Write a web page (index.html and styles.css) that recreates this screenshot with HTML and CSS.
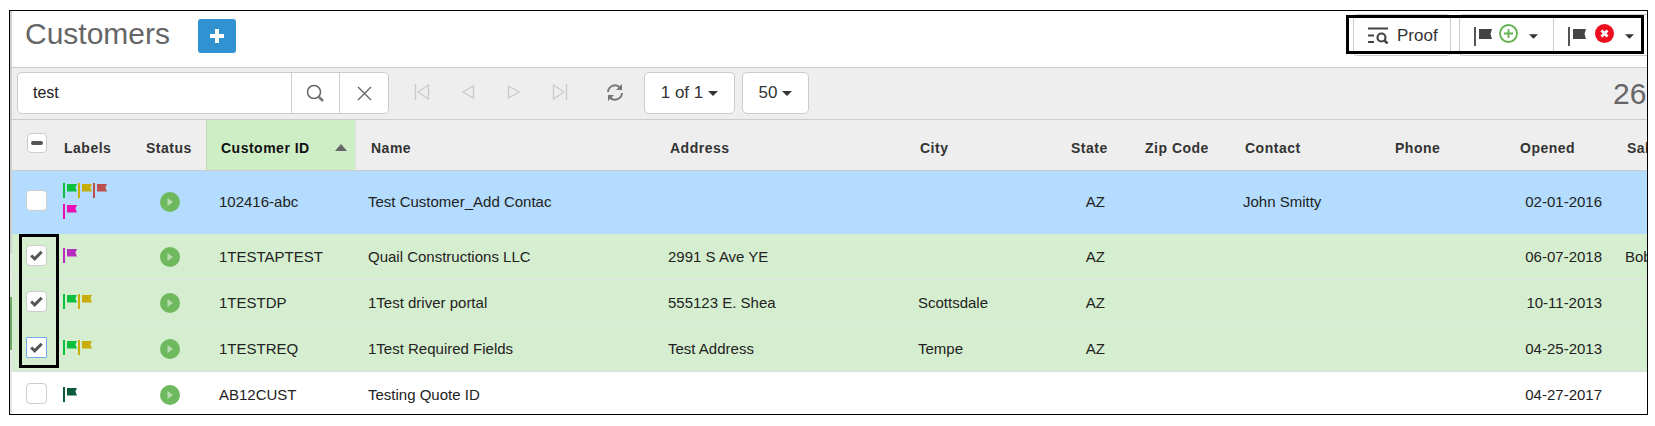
FILE: index.html
```html
<!DOCTYPE html>
<html lang="en">
<head>
<meta charset="utf-8">
<title>Customers</title>
<link rel="stylesheet" href="styles.css">
</head>
<body>
<svg class="defs" width="0" height="0" aria-hidden="true">
  <symbol id="flag" viewBox="0 0 14 15">
    <rect x="0" y="0" width="2" height="15" fill="currentColor"/>
    <path d="M4 1h10l-1.600 3.500L14 8.500H4z" fill="currentColor"/>
  </symbol>
  <symbol id="play" viewBox="0 0 20 20">
    <circle cx="10" cy="10" r="10" fill="#6eb85e"/>
    <path d="M7.500 6l5.500 4-5.500 4z" fill="#b9dcb0"/>
  </symbol>
  <symbol id="caret" viewBox="0 0 10 5">
    <path d="M0 0h10L5 5z" fill="currentColor"/>
  </symbol>
  <symbol id="bigflag" viewBox="0 0 18 19">
    <rect x="0" y="0" width="2" height="19" fill="#555"/>
    <path d="M5 2h13l-1.500 5 1.500 5H5z" fill="#444"/>
  </symbol>
  <symbol id="check" viewBox="0 0 13 11">
    <path d="M1.200 5.500l3.500 3.300 7-7" stroke="#555" stroke-width="3" fill="none"/>
  </symbol>
</svg>
<div class="frame">
  <div class="strip"></div>
  <header class="top">
    <div class="title-wrap">
      <h1 class="title">Customers</h1>
      <button class="add" type="button">
        <svg width="14" height="14" viewBox="0 0 14 14"><path d="M5 0h4v5h5v4H9v5H5V9H0V5h5z" fill="#fff"/></svg>
      </button>
    </div>
    <div class="actions">
      <button class="act proof" type="button">
        <svg width="21" height="17" viewBox="0 0 21 17"><path d="M0 1.500h20M0 8.500h6M0 15h6" stroke="#444" stroke-width="2" fill="none"/><circle cx="13.500" cy="10.500" r="4" stroke="#444" stroke-width="2.200" fill="none"/><path d="M16.500 13.500l3 3" stroke="#444" stroke-width="2.500"/></svg>
        <span>Proof</span>
      </button>
      <div class="act-group">
        <button class="act flagbtn" type="button">
          <svg class="bf" width="18" height="19"><use href="#bigflag"/></svg>
          <svg class="ic" width="19" height="19" viewBox="0 0 19 19"><circle cx="9.500" cy="9.500" r="8.500" fill="#fff" stroke="#62b34f" stroke-width="1.800"/><path d="M9.500 5v9M5 9.500h9" stroke="#62b34f" stroke-width="1.800"/></svg>
          <svg class="cr" width="9" height="5"><use href="#caret"/></svg>
        </button>
        <button class="act flagbtn second" type="button">
          <svg class="bf" width="18" height="19"><use href="#bigflag"/></svg>
          <svg class="ic" width="19" height="19" viewBox="0 0 19 19"><circle cx="9.500" cy="9.500" r="9.500" fill="#ee0f1e"/><path d="M6.500 6.500l6 6M12.500 6.500l-6 6" stroke="#fff" stroke-width="2.800"/></svg>
          <svg class="cr" width="9" height="5"><use href="#caret"/></svg>
        </button>
      </div>
    </div>
  </header>
  <div class="toolbar">
    <div class="search">
      <span class="search-text">test</span>
      <span class="search-btn">
        <svg width="19" height="19" viewBox="0 0 19 19"><circle cx="8" cy="8" r="6.500" stroke="#666" stroke-width="1.500" fill="none"/><path d="M12.500 12.500l4.500 4.500" stroke="#777" stroke-width="2.500"/></svg>
      </span>
      <span class="search-btn clear">
        <svg width="15" height="15" viewBox="0 0 15 15"><path d="M1 1l13 13M14 1L1 14" stroke="#666" stroke-width="1.400"/></svg>
      </span>
    </div>
    <div class="pager">
      <svg width="16" height="16" viewBox="0 0 16 16"><path d="M1.500 0v16M14.500 1L4 8l10.500 7z" stroke="#ccc" stroke-width="1.400" fill="none"/></svg>
      <svg width="16" height="16" viewBox="0 0 16 16"><path d="M13.500 2L3 8l10.500 6z" stroke="#ccc" stroke-width="1.400" fill="none"/></svg>
      <svg width="16" height="16" viewBox="0 0 16 16"><path d="M2.500 2L13 8 2.500 14z" stroke="#ccc" stroke-width="1.400" fill="none"/></svg>
      <svg width="16" height="16" viewBox="0 0 16 16"><path d="M14.500 0v16M1.500 1L12 8 1.500 15z" stroke="#ccc" stroke-width="1.400" fill="none"/></svg>
    </div>
    <svg class="refresh" width="18" height="17" viewBox="0 0 18 17"><path d="M2 8a7 7 0 0 1 12-4.500M16 9a7 7 0 0 1-12 4.500" stroke="#777" stroke-width="2" fill="none"/><path d="M16 0v6h-6zM2 17v-6h6z" fill="#777"/></svg>
    <button class="sel sel-page" type="button">1 of 1 <svg width="10" height="5"><use href="#caret"/></svg></button>
    <button class="sel sel-size" type="button">50 <svg width="10" height="5"><use href="#caret"/></svg></button>
    <span class="count">26</span>
  </div>
  <div class="grid-wrap">
    <table class="grid">
      <colgroup>
        <col class="c-cb"><col class="c-labels"><col class="c-status"><col class="c-id"><col class="c-name"><col class="c-addr"><col class="c-city"><col class="c-state"><col class="c-zip"><col class="c-contact"><col class="c-phone"><col class="c-opened"><col class="c-sales">
      </colgroup>
      <thead>
        <tr>
          <th class="cb-cell"><span class="box box-minus"><i></i></span></th>
          <th class="th-labels">Labels</th>
          <th class="th-status">Status</th>
          <th class="th-sorted">Customer ID<svg class="sort" width="12" height="7" viewBox="0 0 12 7"><path d="M6 0l6 7H0z" fill="#666"/></svg></th>
          <th>Name</th><th>Address</th><th>City</th><th>State</th><th>Zip Code</th><th>Contact</th><th>Phone</th><th>Opened</th><th>Sales</th>
        </tr>
      </thead>
      <tbody>
        <tr class="row-blue">
          <td class="cb-cell"><span class="box"></span></td>
          <td class="labels"><div class="flags">
            <svg class="f f-green"><use href="#flag"/></svg><svg class="f f-yellow"><use href="#flag"/></svg><svg class="f f-red"><use href="#flag"/></svg><svg class="f f-pink"><use href="#flag"/></svg>
          </div></td>
          <td class="status"><svg width="20" height="20"><use href="#play"/></svg></td>
          <td>102416-abc</td><td class="name">Test Customer_Add Contac</td><td></td><td></td><td class="st">AZ</td><td></td><td>John Smitty</td><td></td><td class="date">02-01-2016</td><td></td>
        </tr>
        <tr class="row-green">
          <td class="cb-cell"><span class="box"><svg width="13" height="11"><use href="#check"/></svg></span></td>
          <td class="labels"><div class="flags"><svg class="f f-purple"><use href="#flag"/></svg></div></td>
          <td class="status"><svg width="20" height="20"><use href="#play"/></svg></td>
          <td>1TESTAPTEST</td><td class="name">Quail Constructions LLC</td><td>2991 S Ave YE</td><td></td><td class="st">AZ</td><td></td><td></td><td></td><td class="date">06-07-2018</td><td>Bob</td>
        </tr>
        <tr class="row-green">
          <td class="cb-cell"><span class="box"><svg width="13" height="11"><use href="#check"/></svg></span></td>
          <td class="labels"><div class="flags"><svg class="f f-green"><use href="#flag"/></svg><svg class="f f-yellow"><use href="#flag"/></svg></div></td>
          <td class="status"><svg width="20" height="20"><use href="#play"/></svg></td>
          <td>1TESTDP</td><td class="name">1Test driver portal</td><td>555123 E. Shea</td><td>Scottsdale</td><td class="st">AZ</td><td></td><td></td><td></td><td class="date">10-11-2013</td><td></td>
        </tr>
        <tr class="row-green row-end">
          <td class="cb-cell"><span class="box focus"><svg width="13" height="11"><use href="#check"/></svg></span></td>
          <td class="labels"><div class="flags"><svg class="f f-green"><use href="#flag"/></svg><svg class="f f-yellow"><use href="#flag"/></svg></div></td>
          <td class="status"><svg width="20" height="20"><use href="#play"/></svg></td>
          <td>1TESTREQ</td><td class="name">1Test Required Fields</td><td>Test Address</td><td>Tempe</td><td class="st">AZ</td><td></td><td></td><td></td><td class="date">04-25-2013</td><td></td>
        </tr>
        <tr class="row-white">
          <td class="cb-cell"><span class="box"></span></td>
          <td class="labels"><div class="flags"><svg class="f f-dark"><use href="#flag"/></svg></div></td>
          <td class="status"><svg width="20" height="20"><use href="#play"/></svg></td>
          <td>AB12CUST</td><td class="name">Testing Quote ID</td><td></td><td></td><td></td><td></td><td></td><td></td><td class="date">04-27-2017</td><td></td>
        </tr>
      </tbody>
    </table>
  </div>
  <div class="mark mark-top"></div>
  <div class="mark mark-left"></div>
</div>
</body>
</html>
```
FILE: styles.css
```css
* { box-sizing: border-box; }
html, body { margin: 0; padding: 0; background: #fff; }
body { padding: 10px 0 0 9px; font-family: "Liberation Sans", Arial, sans-serif; color: #222; overflow: hidden; }
.defs { position: absolute; }
.frame { position: relative; width: 1639px; height: 405px; border: 1px solid #000; padding-left: 2px; overflow: hidden; background: #fff; }
.strip { position: absolute; left: 0; top: 0; bottom: 0; width: 2px; background: linear-gradient(#cfcfcf 0, #cfcfcf 60%, #e6e6e6 60%); }
.strip::after { content: ""; position: absolute; left: 0; top: 286px; width: 2px; height: 53px; background: #6fa863; }
button { font-family: inherit; }

.top { height: 56px; display: flex; justify-content: space-between; align-items: flex-start; }
.title-wrap { display: flex; align-items: flex-start; padding: 8px 0 0 13px; }
.title { margin: 0; font-size: 30px; line-height: 30px; font-weight: 400; color: #666; }
.add { margin-left: 28px; width: 38px; height: 34px; border: 0; border-radius: 3px; background: #3092d1; display: flex; align-items: center; justify-content: center; padding: 0; }

.actions { display: flex; gap: 8px; padding-top: 3px; margin-right: -6px; }
.act { height: 42px; background: #fff; border: 1px solid #ccc; border-radius: 4px; display: flex; align-items: center; padding: 0; color: #333; font-size: 17px; }
.proof { width: 98px; gap: 8px; padding-left: 14px; padding-top: 1px; }
.act-group { display: flex; }
.flagbtn { width: 94px; padding-left: 14px; border-radius: 4px 0 0 4px; border-right: 0; }
.flagbtn.second { border-radius: 0 4px 4px 0; border-right: 1px solid #ccc; width: 100px; }
.flagbtn svg { flex: none; }
.bf { margin: 3px 7px 0 0; }
.ic { margin-bottom: 3px; }
.cr { margin: 2px 0 0 11px; color: #333; }
.second .bf { margin-right: 9px; }
.second .cr { margin-left: 11px; }

.toolbar { height: 53px; background: #eee; border-top: 1px solid #ccc; border-bottom: 1px solid #ccc; display: flex; align-items: center; padding-left: 5px; }
.search { width: 372px; height: 42px; background: #fff; border: 1px solid #ccc; border-radius: 5px; display: flex; margin-top: -1px; }
.search-text { flex: 1; font-size: 16px; line-height: 40px; padding-left: 15px; color: #222; }
.search-btn { width: 48px; border-left: 1px solid #ccc; display: flex; align-items: center; justify-content: center; }
.search-btn.clear { width: 49px; }
.pager { display: flex; gap: 30px; margin-left: 25px; margin-top: -3px; }
.refresh { margin-left: 38px; margin-top: -3px; flex: none; }
.sel { height: 42px; margin-top: -1px; background: #fff; border: 1px solid #ccc; border-radius: 5px; font-size: 17px; color: #333; padding: 0; display: flex; align-items: center; justify-content: center; gap: 5px; }
.sel svg { color: #333; }
.sel-page { width: 91px; margin-left: 20px; }
.sel-size { width: 67px; margin-left: 7px; }
.count { margin-left: auto; margin-right: 0; width: 34px; flex: none; font-size: 30px; line-height: 30px; color: #666; white-space: nowrap; overflow: hidden; }

.grid-wrap { overflow: hidden; }
.grid { table-layout: fixed; width: 1750px; border-collapse: separate; border-spacing: 0; font-size: 15px; }
.c-cb { width: 39px; } .c-labels { width: 85px; } .c-status { width: 70px; } .c-id { width: 150px; }
.c-name { width: 299px; } .c-addr { width: 250px; } .c-city { width: 151px; } .c-state { width: 74px; }
.c-zip { width: 100px; } .c-contact { width: 150px; } .c-phone { width: 125px; } .c-opened { width: 107px; } .c-sales { width: 150px; }
th { height: 51px; padding: 5px 0 0 15px; background: #eee; border-bottom: 1px solid #ccc; text-align: left; font-size: 14px; font-weight: 700; letter-spacing: .5px; color: #333; white-space: nowrap; position: relative; }
.th-labels { padding-left: 13px; }
.th-status { padding-left: 10px; }
.th-sorted { background: #ceeec6; color: #111; padding-left: 14px; border-left: 1px solid #c4d8c0; border-right: 1px solid #ddd; }
.sort { position: absolute; right: 8px; top: 24px; }
td { padding: 0 0 2px 13px; font-size: 15px; color: #222; white-space: nowrap; overflow: hidden; vertical-align: middle; }
.row-blue td { height: 63px; background: #b3dcff; border-bottom: 1px solid #b3dcff; }
.row-green td { height: 46px; padding-bottom: 0; background: #d6eed0; border-bottom: 1px solid #dde3dd; }
.row-end td { border-bottom-color: #d9dfd9; }
.row-white td { height: 46px; background: #fff; }
td.name { padding-left: 12px; }
td.cb-cell { padding: 0 0 0 14px; }
th.cb-cell { padding: 0 0 4px 15px; }
td.labels { padding: 0 0 0 12px; }
td.status { padding: 0 0 0 24px; }
td.status svg { display: block; }
td.st { text-align: right; padding-right: 25px; }
td.date { text-align: right; padding-right: 10px; }

.box { width: 21px; height: 21px; background: #fff; border: 1px solid #ccc; border-radius: 4px; display: flex; align-items: center; justify-content: center; }
td .box { margin-bottom: 3px; }
.box-minus { width: 20px; height: 20px; }
.box-minus i { display: block; width: 12px; height: 4px; border-radius: 2px; background: #555; }
.box.focus { border: 1px solid #75a8f0; border-radius: 1px; }
.flags { display: flex; flex-wrap: wrap; width: 48px; gap: 6px 1px; margin-top: -2px; }
.f { width: 14px; height: 15px; display: block; }
.f-green { color: #0cbf3c; }
.f-yellow { color: #c8ad0a; }
.f-red { color: #bd4e4e; }
.f-pink { color: #e90fb5; }
.f-purple { color: #b62dbd; }
.f-dark { color: #0b5c3a; }

.mark { position: absolute; border: 3px solid #000; pointer-events: none; }
.mark-top { left: 1336px; top: 4px; width: 298px; height: 39px; }
.mark-left { left: 9px; top: 223px; width: 40px; height: 134px; }
```
